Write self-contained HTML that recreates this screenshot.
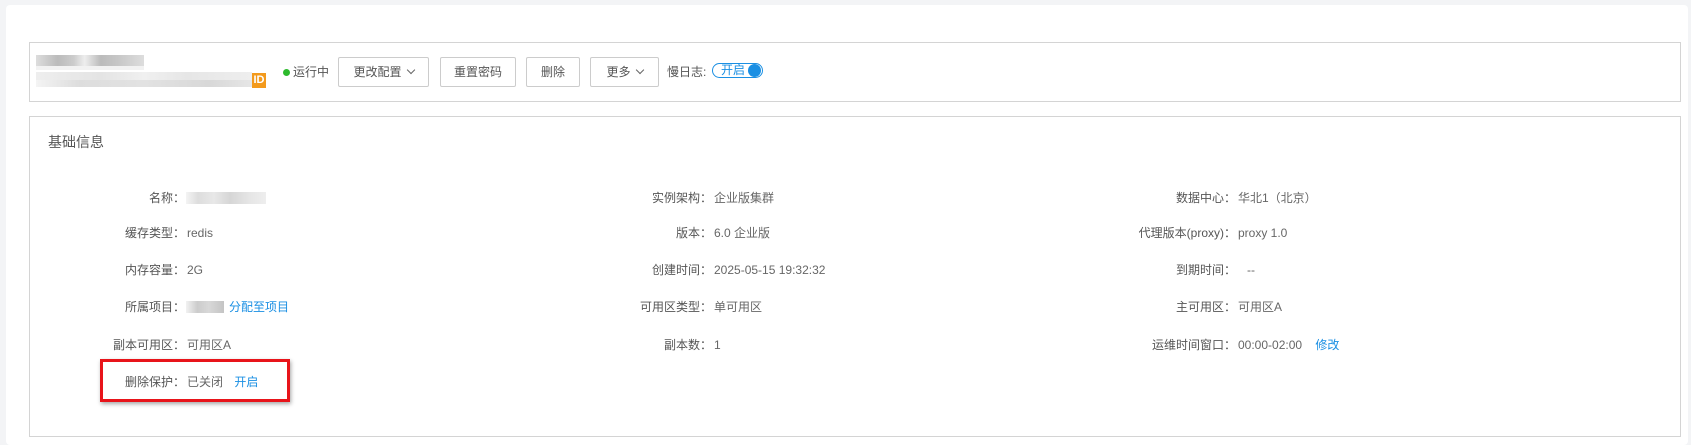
<!DOCTYPE html>
<html><head><meta charset="utf-8"><style>
*{margin:0;padding:0;box-sizing:border-box}
body{width:1691px;height:441px;background:#f3f4f6;font-family:"Liberation Sans","Noto Sans CJK SC",sans-serif;font-size:12px;color:#555;position:relative;overflow:hidden}
.card{position:absolute;left:6px;top:5px;width:1682px;height:440px;background:#fff;border-radius:4px}
.box{position:absolute;border:1px solid #d4d4d4;background:#fff}
.a{position:absolute;white-space:nowrap;line-height:14px}
.btn{position:absolute;top:57px;height:30px;border:1px solid #ccc;border-radius:2px;background:#fff;color:#555;text-align:center;line-height:28px;font-size:12px}
.blur{position:absolute}
.lab{position:absolute;text-align:right;white-space:nowrap;line-height:14px;color:#555}
.val{position:absolute;white-space:nowrap;line-height:14px;color:#666}
.link{color:#1a8fe3}
.chev{display:inline-block;width:6px;height:6px;border-right:1px solid #666;border-bottom:1px solid #666;transform:rotate(45deg);margin-left:6px;position:relative;top:-3px}
</style></head><body>
<div class="card"></div>
<div class="box" style="left:29px;top:42px;width:1652px;height:60px"></div>
<div class="box" style="left:29px;top:116px;width:1652px;height:321px"></div>

<div class="blur" style="left:36px;top:55px;width:108px;height:11px;background:linear-gradient(90deg,#ddd,#bbb 20%,#ccc 35%,#eee 45%,#bbb 60%,#c6c6c6 75%,#ddd)"></div>
<div class="blur" style="left:36px;top:66px;width:108px;height:4px;background:#f2f2f2"></div>
<div class="blur" style="left:36px;top:72px;width:216px;height:8px;background:linear-gradient(90deg,#eee,#e4e4e4 30%,#f0f0f0 50%,#e6e6e6 70%,#eee)"></div>
<div class="blur" style="left:36px;top:80px;width:216px;height:7px;background:linear-gradient(90deg,#f4f4f4,#ddd 20%,#e2e2e2 50%,#d8d8d8 80%,#e6e6e6)"></div>
<div class="a" style="left:252px;top:73px;width:14px;height:15px;background:#f39a1c;color:#fff;font-size:11px;line-height:15px;text-align:center;font-weight:bold">ID</div>

<div style="position:absolute;left:283px;top:69px;width:7px;height:7px;border-radius:50%;background:#2dba2d"></div>
<div class="a" style="left:293px;top:65px">运行中</div>
<div class="btn" style="left:338px;width:91px">更改配置<span class="chev"></span></div>
<div class="btn" style="left:440px;width:76px">重置密码</div>
<div class="btn" style="left:526px;width:54px">删除</div>
<div class="btn" style="left:590px;width:69px">更多<span class="chev"></span></div>
<div class="a" style="left:667px;top:65px">慢日志:</div>
<div style="position:absolute;left:712px;top:63px;width:51px;height:15px;border:1px solid #1a8fe3;border-radius:8px">
 <span style="position:absolute;left:8px;top:0;line-height:13px;color:#1a8fe3;font-size:12px">开启</span>
 <span style="position:absolute;right:1px;top:0;width:13px;height:13px;border-radius:50%;background:#1a8fe3"></span>
</div>

<div class="a" style="left:48px;top:134px;font-size:14px;line-height:16px">基础信息</div>

<!-- col1 -->
<div class="lab" style="right:1506px;top:191px">名称：</div>
<div class="blur" style="left:186px;top:192px;width:80px;height:12px;background:linear-gradient(90deg,#f4f4f4,#ddd 15%,#e8e8e8 35%,#d6d6d6 55%,#e6e6e6 80%,#eee)"></div>
<div class="lab" style="right:1506px;top:226px">缓存类型：</div>
<div class="val" style="left:187px;top:226px">redis</div>
<div class="lab" style="right:1506px;top:263px">内存容量：</div>
<div class="val" style="left:187px;top:263px">2G</div>
<div class="lab" style="right:1506px;top:300px">所属项目：</div>
<div class="blur" style="left:186px;top:301px;width:38px;height:12px;background:linear-gradient(90deg,#f2f2f2,#ccc 30%,#d8d8d8 60%,#c4c4c4)"></div>
<div class="val link" style="left:229px;top:300px">分配至项目</div>
<div class="lab" style="right:1506px;top:338px">副本可用区：</div>
<div class="val" style="left:187px;top:338px">可用区A</div>
<div class="lab" style="right:1506px;top:375px">删除保护：</div>
<div class="val" style="left:187px;top:375px">已关闭 <span class="link" style="margin-left:8px">开启</span></div>
<div style="position:absolute;left:100px;top:359px;width:190px;height:43px;border:3px solid #e8141a;box-shadow:1px 2px 4px rgba(0,0,0,.35)"></div>

<!-- col2 -->
<div class="lab" style="right:979px;top:191px">实例架构：</div>
<div class="val" style="left:714px;top:191px">企业版集群</div>
<div class="lab" style="right:979px;top:226px">版本：</div>
<div class="val" style="left:714px;top:226px">6.0 企业版</div>
<div class="lab" style="right:979px;top:263px">创建时间：</div>
<div class="val" style="left:714px;top:263px">2025-05-15 19:32:32</div>
<div class="lab" style="right:979px;top:300px">可用区类型：</div>
<div class="val" style="left:714px;top:300px">单可用区</div>
<div class="lab" style="right:979px;top:338px">副本数：</div>
<div class="val" style="left:714px;top:338px">1</div>

<!-- col3 -->
<div class="lab" style="right:455px;top:191px">数据中心：</div>
<div class="val" style="left:1238px;top:191px">华北1（北京）</div>
<div class="lab" style="right:455px;top:226px">代理版本(proxy)：</div>
<div class="val" style="left:1238px;top:226px">proxy 1.0</div>
<div class="lab" style="right:455px;top:263px">到期时间：</div>
<div class="val" style="left:1247px;top:263px">--</div>
<div class="lab" style="right:455px;top:300px">主可用区：</div>
<div class="val" style="left:1238px;top:300px">可用区A</div>
<div class="lab" style="right:455px;top:338px">运维时间窗口：</div>
<div class="val" style="left:1238px;top:338px">00:00-02:00 <span class="link" style="margin-left:10px">修改</span></div>
</body></html>
